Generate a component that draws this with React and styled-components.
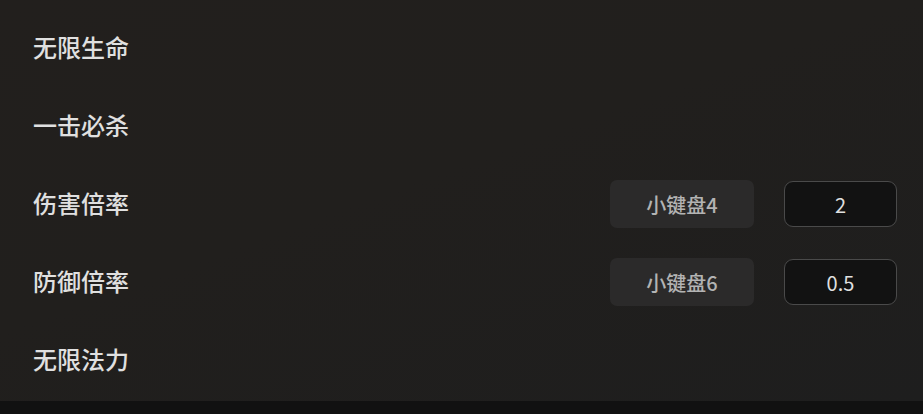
import React from 'react'
import styled, { createGlobalStyle } from 'styled-components'

const GlobalStyle = createGlobalStyle`
  html, body {
    margin: 0;
    padding: 0;
    background: #111111;
  }
  * {
    box-sizing: border-box;
  }
`

const Page = styled.div`
  width: 923px;
  height: 414px;
  display: flex;
  flex-direction: column;
  overflow: hidden;
  font-family: 'Noto Sans CJK SC', 'Noto Sans', sans-serif;
`

const Panel = styled.div`
  height: 401px;
  padding: 8px 26px 0 33px;
  background: linear-gradient(160deg, #221f1d 0%, #211f1d 45%, #1e1e1e 100%);
  display: flex;
  flex-direction: column;
`

const Footer = styled.div`
  flex: 1;
  background: #111111;
`

const Row = styled.div`
  height: 78px;
  display: flex;
  align-items: center;
  justify-content: space-between;
`

const Label = styled.span`
  font-size: 24px;
  font-weight: 500;
  color: #e0e0e0;
  line-height: 1;
`

const Controls = styled.div`
  display: flex;
  align-items: center;
  gap: 30px;
  margin-top: 2px;
`

const KeyButton = styled.button`
  width: 144px;
  height: 48px;
  border: none;
  border-radius: 7px;
  background: #2b2a2a;
  color: #b3b3b3;
  font-family: inherit;
  font-size: 20px;
  font-weight: 500;
  cursor: pointer;
`

const ValueInput = styled.input`
  width: 113px;
  height: 46px;
  border: 1px solid #4a4a4a;
  border-radius: 9px;
  background: #121212;
  color: #e0e0e0;
  font-family: inherit;
  font-size: 20px;
  text-align: center;
  outline: none;
`

const rows = [
  { label: '无限生命' },
  { label: '一击必杀' },
  { label: '伤害倍率', hotkey: '小键盘4', value: '2' },
  { label: '防御倍率', hotkey: '小键盘6', value: '0.5' },
  { label: '无限法力' },
]

export default function App() {
  return (
    <Page>
      <GlobalStyle />
      <Panel>
        {rows.map((row) => (
          <Row key={row.label}>
            <Label>{row.label}</Label>
            {row.hotkey && (
              <Controls>
                <KeyButton>{row.hotkey}</KeyButton>
                <ValueInput defaultValue={row.value} />
              </Controls>
            )}
          </Row>
        ))}
      </Panel>
      <Footer />
    </Page>
  )
}
